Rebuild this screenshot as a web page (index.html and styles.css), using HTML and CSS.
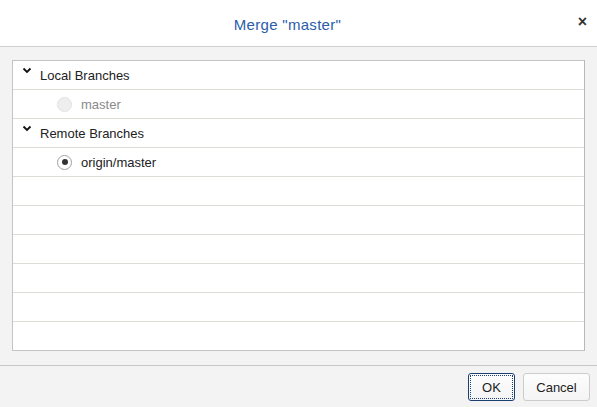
FILE: index.html
```html
<!DOCTYPE html>
<html>
<head>
<meta charset="utf-8">
<link rel="stylesheet" href="styles.css">
</head>
<body>
<div class="dialog">
  <header class="header">
    <div class="title">Merge "master"</div>
    <div class="close">×</div>
  </header>
  <main class="body">
    <div class="list">
      <div class="row group">
        <svg class="chev" width="10" height="7" viewBox="0 0 10 7"><polyline points="1.5,1.5 5,5 8.5,1.5" fill="none" stroke="#111" stroke-width="1.8"/></svg>
        <span class="label">Local Branches</span>
      </div>
      <div class="row item">
        <span class="radio disabled"></span>
        <span class="label muted">master</span>
      </div>
      <div class="row group">
        <svg class="chev" width="10" height="7" viewBox="0 0 10 7"><polyline points="1.5,1.5 5,5 8.5,1.5" fill="none" stroke="#111" stroke-width="1.8"/></svg>
        <span class="label">Remote Branches</span>
      </div>
      <div class="row item">
        <span class="radio checked"></span>
        <span class="label">origin/master</span>
      </div>
      <div class="row"></div>
      <div class="row"></div>
      <div class="row"></div>
      <div class="row"></div>
      <div class="row"></div>
      <div class="row"></div>
    </div>
  </main>
  <footer class="footer">
    <button class="btn primary">OK</button>
    <button class="btn">Cancel</button>
  </footer>
</div>
</body>
</html>
```
FILE: styles.css
```css
html, body {
  margin: 0;
  padding: 0;
}
body {
  width: 597px;
  height: 407px;
  overflow: hidden;
  font-family: "Liberation Sans", Arial, sans-serif;
  background: #f3f3f3;
}
.dialog {
  display: flex;
  flex-direction: column;
  height: 407px;
}
.header {
  height: 46px;
  background: #fff;
  border-bottom: 1px solid #cfcfcf;
  display: flex;
  align-items: center;
  justify-content: center;
  padding-right: 22px;
  position: relative;
}
.title {
  color: #2a5cab;
  font-size: 15px;
  letter-spacing: 0.3px;
  margin-top: 2px;
}
.close {
  position: absolute;
  right: 10px;
  top: 13px;
  font-size: 16px;
  font-weight: bold;
  color: #333;
}
.body {
  padding: 13px 12px 14px 12px;
  flex: none;
}
.list {
  background: #fff;
  border: 1px solid #c4c4c4;
  border-right-color: #b8b8b8;
}
.row {
  height: 28px;
  border-bottom: 1px solid #dcdcd6;
  display: flex;
  align-items: center;
  font-size: 13px;
  color: #222;
}
.row:last-child {
  border-bottom: none;
}
.group {
  padding-left: 9px;
}
.chev {
  align-self: flex-start;
  margin-top: 6px;
  margin-right: 8px;
}
.item {
  padding-left: 44px;
}
.radio {
  width: 13px;
  height: 13px;
  border-radius: 50%;
  border: 1px solid #a0a0a0;
  margin-right: 9px;
  box-sizing: content-box;
  display: flex;
  align-items: center;
  justify-content: center;
  background: #fff;
}
.radio.disabled {
  background: #eeeeee;
  border-color: #e2e2e2;
}
.radio.checked::after {
  content: "";
  width: 6px;
  height: 6px;
  border-radius: 50%;
  background: #333;
}
.muted {
  color: #8a8a8a;
}
.footer {
  flex: 1;
  border-top: 1px solid #c6c6c6;
  display: flex;
  justify-content: flex-end;
  align-items: flex-start;
  padding: 7px 7px 0 0;
  gap: 8px;
}
.btn {
  height: 28px;
  width: 67px;
  padding: 0;
  font-family: "Liberation Sans", Arial, sans-serif;
  font-size: 13px;
  color: #222;
  background: linear-gradient(#fdfdfd, #f4f4f4);
  border: 1px solid #cccccc;
  border-radius: 3px;
}
.btn.primary {
  width: 47px;
  border: 1px solid #1c3f72;
  outline: 1px dotted #1c3f72;
  outline-offset: -3px;
}
```
